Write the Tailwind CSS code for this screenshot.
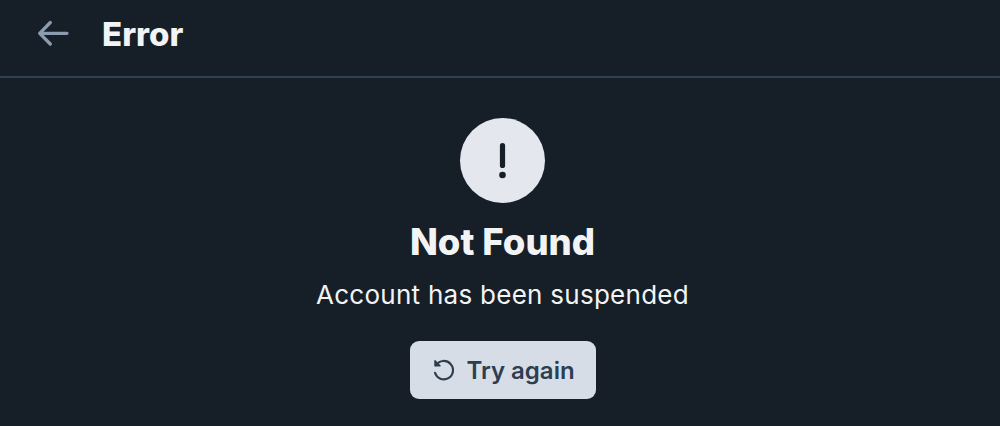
<!DOCTYPE html>
<html lang="en">
<head>
  <meta charset="UTF-8">
  <meta name="viewport" content="width=device-width, initial-scale=1">
  <title>Error</title>
  <script src="https://cdn.jsdelivr.net/npm/@tailwindcss/browser@4"></script>
</head>
<body class="bg-[#161e27] text-[#f1f3f5] font-['Inter',sans-serif] h-screen overflow-hidden">
  <!-- Header with the back button -->
  <header class="flex items-center h-[78px] pb-2 pl-9 border-b-2 border-[#2e4052]">
    <button class="w-9 h-9" aria-label="Back">
      <svg class="w-9 h-9" viewBox="0 0 36 36" fill="none" stroke="#8c9caf" stroke-width="3.300" stroke-linecap="round" stroke-linejoin="round">
        <path d="M31 17.300H3.700M14.300 6.500L3.700 17.300L14.300 28"/>
      </svg>
    </button>
    <h1 class="ml-[30px] text-[33px] leading-10 font-extrabold">Error</h1>
  </header>

  <!-- Error message -->
  <main class="flex flex-col items-center pt-10 pl-[5px]">
    <div class="flex items-center justify-center w-[85px] h-[85px] rounded-full bg-[#e4e7ee]">
      <svg class="w-[85px] h-[85px]" viewBox="0 0 85 85" fill="#161e27">
        <rect x="39.900" y="25" width="5.200" height="25" rx="2.600"/>
        <circle cx="42.500" cy="57" r="3.300"/>
      </svg>
    </div>
    <h2 class="mt-[15px] text-[36.500px] leading-[48px] font-extrabold">Not Found</h2>
    <p class="mt-2 text-[26px] leading-[42px] tracking-[0.27px]">Account has been suspended</p>
    <button class="mt-[25px] flex items-center w-[186px] h-[58px] pl-[22px] gap-[11px] rounded-[9px] bg-[#d6dde6] text-[#2c3e50]">
      <svg class="w-6 h-6" viewBox="0 0 24 24" fill="none" stroke="currentColor" stroke-width="2.200" stroke-linecap="round" stroke-linejoin="round">
        <path d="M3 2.800v5h5z" fill="currentColor" stroke-width="1.500"/>
        <path d="M4.200 7a9.200 9.200 0 1 1 -1.200 7.800"/>
      </svg>
      <span class="pt-0.5 text-2xl font-semibold">Try again</span>
    </button>
  </main>
</body>
</html>
